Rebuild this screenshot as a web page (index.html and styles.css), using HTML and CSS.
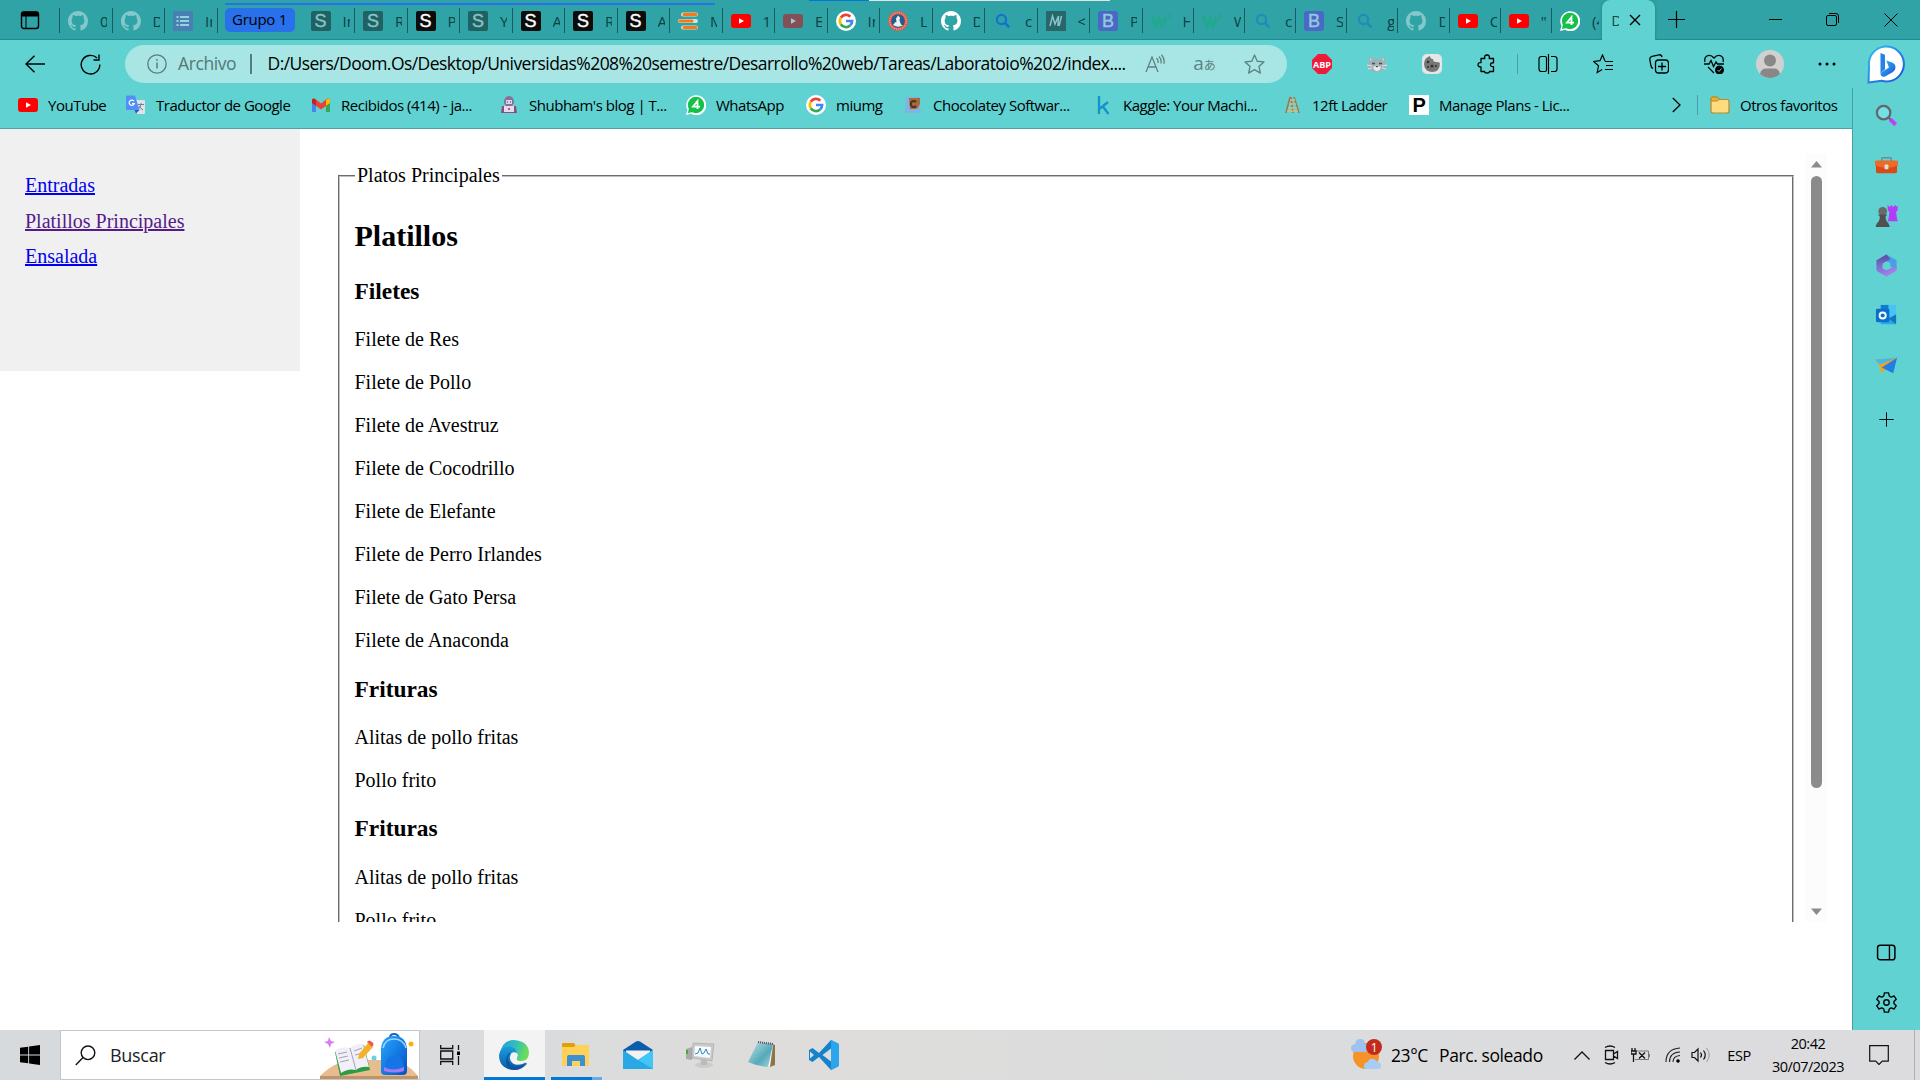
FILE: index.html
```html
<!DOCTYPE html>
<html lang="es">
<head>
<meta charset="utf-8">
<title>Platillos</title>
<link rel="stylesheet" href="styles.css">
</head>
<body>
<svg class="defs" aria-hidden="true">
  <defs>
    <linearGradient id="gEdge" x1="0" y1="0" x2="1" y2=".3"><stop offset="0" stop-color="#1ba0e0"/><stop offset=".6" stop-color="#35c1b5"/><stop offset="1" stop-color="#6bdc5a"/></linearGradient>
    <linearGradient id="gEdge2" x1="0" y1="0" x2="0" y2="1"><stop offset="0" stop-color="#1b9de2"/><stop offset="1" stop-color="#0c59a4"/></linearGradient>
    <linearGradient id="gBing" x1="0" y1="0" x2="1" y2="1"><stop offset="0" stop-color="#2fc0f5"/><stop offset="1" stop-color="#1c50d8"/></linearGradient>
    <linearGradient id="gBag" x1="0" y1="0" x2="1" y2="1"><stop offset="0" stop-color="#27a7ff"/><stop offset="1" stop-color="#0450c8"/></linearGradient>
    <linearGradient id="gOffice" x1="0" y1="0" x2="1" y2="1"><stop offset="0" stop-color="#7c63d8"/><stop offset="1" stop-color="#b58bee"/></linearGradient>
    <linearGradient id="gOffice2" x1="0" y1="0" x2="0" y2="1"><stop offset="0" stop-color="#5a4aa8"/><stop offset="1" stop-color="#8f88e0"/></linearGradient>
    <linearGradient id="gNote" x1="0" y1="0" x2="1" y2="1"><stop offset="0" stop-color="#bfe3e8"/><stop offset=".6" stop-color="#56a9b9"/><stop offset="1" stop-color="#a7d7df"/></linearGradient>
  </defs>
  <symbol id="github" viewBox="0 0 16 16"><path fill="currentColor" d="M8 0C3.58 0 0 3.58 0 8c0 3.54 2.29 6.53 5.47 7.59.4.07.55-.17.55-.38 0-.19-.01-.82-.01-1.49-2.01.37-2.53-.49-2.69-.94-.09-.23-.48-.94-.82-1.13-.28-.15-.68-.52-.01-.53.63-.01 1.08.58 1.23.82.72 1.21 1.87.87 2.33.66.07-.52.28-.87.51-1.07-1.78-.2-3.64-.89-3.64-3.95 0-.87.31-1.59.82-2.15-.08-.2-.36-1.02.08-2.12 0 0 .67-.21 2.2.82.64-.18 1.32-.27 2-.27s1.36.09 2 .27c1.53-1.04 2.2-.82 2.2-.82.44 1.1.16 1.92.08 2.12.51.56.82 1.27.82 2.15 0 3.07-1.87 3.75-3.65 3.95.29.25.54.73.54 1.48 0 1.07-.01 1.93-.01 2.2 0 .21.15.46.55.38A8.01 8.01 0 0016 8c0-4.42-3.58-8-8-8z"/></symbol>
  <symbol id="list" viewBox="0 0 20 20"><rect width="20" height="20" rx="1" fill="#4880b4"/><path d="M3.500 6h2M3.500 10h2M3.500 14h2M7 6h9M7 10h9M7 14h9" stroke="#98d0dc" stroke-width="2"/></symbol>
  <symbol id="youtube" viewBox="0 0 20 20"><rect y="3" width="20" height="14" rx="3" fill="currentColor"/><path d="M8 7.200v5.600l5-2.800z" fill="#fff"/></symbol>
  <symbol id="google" viewBox="0 0 20 20"><circle cx="10" cy="10" r="10" fill="#fff"/><g fill="none" stroke-width="2.700"><path d="M4.800 6.800A6.100 6.100 0 0 1 14.300 5.700" stroke="#ea4335"/><path d="M4.800 13.200A6.100 6.100 0 0 1 4.800 6.800" stroke="#fbbc05"/><path d="M14 14.600A6.100 6.100 0 0 1 4.800 13.200" stroke="#34a853"/><path d="M10 10h6.100A6.100 6.100 0 0 1 14 14.600" stroke="#4285f4"/></g></symbol>
  <symbol id="stack" viewBox="0 0 20 20"><path d="M5 3.500h13M2 10h16M5 16.500h13" stroke="#c8e8dd" stroke-width="4" stroke-linecap="round"/><path d="M6 3.500h12M2 10h12M6 16.500h12" stroke="#ff7510" stroke-width="3" stroke-linecap="round"/></symbol>
  <symbol id="crest" viewBox="0 0 20 20"><circle cx="10" cy="10" r="10" fill="#e25b4d"/><circle cx="10" cy="10" r="8.300" fill="none" stroke="#f5c5b5" stroke-dasharray="1 1"/><circle cx="10" cy="10" r="6.800" fill="#235d8a"/><path d="M5 14l2.500-3 1 .5-.5-4 2-3 2 2-.5 3 1.500 4 2 1q-5 2.500-10-.5z" fill="#e8f2f5"/></symbol>
  <symbol id="search" viewBox="0 0 20 20"><circle cx="8.500" cy="8.500" r="4.600" fill="none" stroke="currentColor" stroke-width="2.200"/><path d="M12 12l4.300 4.300" stroke="currentColor" stroke-width="2.600"/></symbol>
  <symbol id="mdn" viewBox="0 0 20 20"><rect width="20" height="20" fill="#28666a"/><path d="M4 15L6.500 5l2.500 8 3.500-8-.5 10M15.500 5L13 15" fill="none" stroke="#87c5c7" stroke-width="1.500"/></symbol>
  <symbol id="w3" viewBox="0 0 20 20"><path d="M1 5.500l4 9 3-6.500 3 6.500 4-8.500" fill="none" stroke="#22a88e" stroke-width="3.600"/><path d="M16 3h3l-1.500 1.800q2 .2 1.200 1.800t-2.700.4" fill="none" stroke="#22a88e" stroke-width="1.200"/></symbol>
  <symbol id="whatsapp" viewBox="0 0 20 20"><path d="M0 20l1.500-5A10 10 0 1 1 5 18.700z" fill="#fff"/><circle cx="10" cy="10" r="8.200" fill="#12c147"/><path d="M2 18l1-5 4 4z" fill="#12c147"/><path d="M11.500 14V6L7 11.700h7" stroke="#fff" stroke-width="1.800" fill="none"/></symbol>
</svg>

<div class="window">
  <header class="strip">
    <div class="progress"></div>
    <div class="group-line"></div>
    <div class="tabmenu"><svg width="20" height="20" viewBox="0 0 20 20"><rect x="1.500" y="2" width="17" height="16.500" rx="2.500" fill="none" stroke="#000" stroke-width="1.400"/><path d="M1.500 6V4q0-2 2-2h13q2 0 2 2v2z" fill="#000" stroke="#000"/><path d="M6 6v12" stroke="#000"/></svg></div>
    <div class="tab dim"><svg><use href="#github"/></svg><span>0</span></div>
    <div class="tab dim"><svg><use href="#github"/></svg><span>D</span></div>
    <div class="tab"><svg><use href="#list"/></svg><span>In</span></div>
    <div class="group"><span>Grupo 1</span></div>
    <div class="tab first"><i class="s faded">S</i><span>In</span></div>
    <div class="tab"><i class="s faded">S</i><span>R</span></div>
    <div class="tab"><i class="s">S</i><span>P</span></div>
    <div class="tab"><i class="s faded">S</i><span>Y</span></div>
    <div class="tab"><i class="s">S</i><span>A</span></div>
    <div class="tab"><i class="s">S</i><span>R</span></div>
    <div class="tab"><i class="s">S</i><span>A</span></div>
    <div class="tab"><svg><use href="#stack"/></svg><span>M</span></div>
    <div class="tab red"><svg><use href="#youtube"/></svg><span>1</span></div>
    <div class="tab red asleep"><svg><use href="#youtube"/></svg><span>E</span></div>
    <div class="tab"><svg><use href="#google"/></svg><span>In</span></div>
    <div class="tab"><svg><use href="#crest"/></svg><span>L</span></div>
    <div class="tab white"><svg><use href="#github"/></svg><span>D</span></div>
    <div class="tab blue"><svg><use href="#search"/></svg><span>c</span></div>
    <div class="tab"><svg><use href="#mdn"/></svg><span>&lt;</span></div>
    <div class="tab"><i class="s b">B</i><span>P</span></div>
    <div class="tab slim"><svg><use href="#w3"/></svg><span>H</span></div>
    <div class="tab slim"><svg><use href="#w3"/></svg><span>W</span></div>
    <div class="tab slim paleblue"><svg><use href="#search"/></svg><span>c</span></div>
    <div class="tab slim"><i class="s b">B</i><span>S</span></div>
    <div class="tab slim paleblue"><svg><use href="#search"/></svg><span>g</span></div>
    <div class="tab slim dim"><svg><use href="#github"/></svg><span>D</span></div>
    <div class="tab slim red"><svg><use href="#youtube"/></svg><span>C</span></div>
    <div class="tab slim red"><svg><use href="#youtube"/></svg><span>"</span></div>
    <div class="tab slim"><svg><use href="#whatsapp"/></svg><span>(4</span></div>
    <div class="tab current"><span>D</span><svg class="x" viewBox="0 0 12 12"><path d="M1 1l10 10M11 1L1 11" stroke="#000" stroke-width="1.400"/></svg></div>
    <div class="newtab"><svg width="17" height="17" viewBox="0 0 17 17"><path d="M8.500 0v17M0 8.500h17" stroke="#000" stroke-width="1.200"/></svg></div>
    <div class="winctl">
      <svg width="13" height="13" viewBox="0 0 13 13"><path d="M0 6.500h13" stroke="#000"/></svg>
      <svg width="13" height="13" viewBox="0 0 13 13"><rect x=".5" y="2.500" width="10" height="10" rx="1.500" fill="none" stroke="#000"/><path d="M3 .5h7q2.500 0 2.500 2.500v7" fill="none" stroke="#000"/></svg>
      <svg width="14" height="14" viewBox="0 0 14 14"><path d="M.5.5l13 13M13.500.5l-13 13" stroke="#000"/></svg>
    </div>
  </header>

  <div class="browser">
    <div class="left">
      <nav class="toolbar">
        <svg class="back" width="21" height="18" viewBox="0 0 21 18"><path d="M20 9H1M9.500.8L1 9l8.500 8.200" fill="none" stroke="#000" stroke-width="1.400"/></svg>
        <svg class="reload" width="21" height="21" viewBox="0 0 21 21"><path d="M19.800 10.500A9.300 9.300 0 1 1 17 4M19 .5V6h-5.500" fill="none" stroke="#000" stroke-width="1.400"/></svg>
        <div class="address">
          <svg width="20" height="20" viewBox="0 0 20 20"><circle cx="10" cy="10" r="9.200" fill="none" stroke="#5f7b7b" stroke-width="1.300"/><path d="M10 8.500v6M10 5v1.800" stroke="#5f7b7b" stroke-width="1.500"/></svg>
          <span class="scheme">Archivo</span><span class="bar"></span>
          <span class="url">D:/Users/Doom.Os/Desktop/Universidas%208%20semestre/Desarrollo%20web/Tareas/Laboratoio%202/index....</span>
          <div class="slots">
            <svg width="20" height="20" viewBox="0 0 20 20"><path d="M1 18L7 3l6 15M3 13h8M11.500 4q2 2 1.500 5M14 2.500q2.800 2.800 2 7M16.500.8q3.500 4 2.400 9" fill="none" stroke="#5f8383" stroke-width="1.300"/></svg>
            <span class="lang">a<small>あ</small></span>
            <svg width="21" height="21" viewBox="0 0 20 20"><path d="M10 1l2.600 5.900 6.400.6-4.800 4.300 1.400 6.400L10 14.900l-5.600 3.300 1.400-6.400L1 7.500l6.400-.6z" fill="none" stroke="#5f8383" stroke-width="1.300" stroke-linejoin="round"/></svg>
          </div>
        </div>
        <div class="exts">
          <svg width="20" height="20" viewBox="0 0 20 20"><path d="M6 0h8l6 6v8l-6 6H6l-6-6V6z" fill="#ee1b3b"/><text x="10" y="13.500" class="abp" text-anchor="middle" textLength="18" lengthAdjust="spacingAndGlyphs">ABP</text></svg>
          <svg width="20" height="20" viewBox="0 0 20 20"><path d="M2 1.500L6 5h8l4-3.500V10l1 4q-4 4-9 4t-9-4l1-4z" fill="#a3afb5"/><path d="M0 11l5 1M20 11l-5 1M1 15l4-1M19 15l-4-1" stroke="#dce5e7"/><path d="M3 3.500l2 2-2 2zM17 3.500l-2 2 2 2z" fill="#d9c6c6"/><path d="M6 13q4-3 8 0-1 4-4 4t-4-4z" fill="#e4e9ea"/><path d="M5 9.500h3M12 9.500h3" stroke="#215c68" stroke-width="1.600"/><path d="M8.500 12h3L10 13.500z" fill="#333"/></svg>
          <svg width="20" height="20" viewBox="0 0 20 20"><rect width="20" height="20" rx="5" fill="#e6e6e6"/><path d="M8 2q0 3 3 3 0 3 3 3t4 1q0 9-8 9-8-1-8-8 0-6 6-8z" fill="#777"/><g fill="#333"><circle cx="6" cy="8" r="1.300"/><circle cx="10" cy="12" r="1.600"/><circle cx="6" cy="13" r="1"/><circle cx="14" cy="12" r="1"/></g></svg>
          <svg width="20" height="20" viewBox="0 0 20 20"><path d="M4 4.500h3.800Q7 1 10 1t2.200 3.500h4.300v4.300q-3-.3-3 1.900t3 1.900v4.900h-4.100Q12.500 19 10 19t-2.400-1.500H4v-4.700Q1 13 1 10.700T4 8.600z" fill="none" stroke="#000" stroke-width="1.300" stroke-linejoin="round"/></svg>
        </div>
        <span class="sep"></span>
        <div class="exts second">
          <svg width="20" height="20" viewBox="0 0 20 20"><path d="M7 2.500H3.500q-2.500 0-2.500 2.500v10q0 2.500 2.500 2.500H7q1.500 0 1.500-1.500V4Q8.500 2.500 7 2.500zM13 2.500h3.500Q19 2.500 19 5v10q0 2.500-2.500 2.500H13M10.500 0v20" fill="none" stroke="#000" stroke-width="1.200"/></svg>
          <svg width="20" height="20" viewBox="0 0 20 20"><path d="M12 7L9.500 1 7 6.700l-6.500.8 5 4.300L4.200 18.500l5-3M12 7.500h8M13 11.500h7M12 15.500h8" fill="none" stroke="#000" stroke-width="1.200"/></svg>
          <svg width="20" height="20" viewBox="0 0 20 20"><rect x="6.500" y="6" width="13" height="13" rx="3" fill="none" stroke="#000" stroke-width="1.300"/><path d="M13 8.500v8M9 12.500h8M4 14.500Q2.500 14 2 12L.8 5.500Q.5 3 3 2.300L10 .8q2.500-.3 3 2.200" fill="none" stroke="#000" stroke-width="1.300"/></svg>
          <svg width="20" height="20" viewBox="0 0 20 20"><path d="M1 8Q0 4 2.500 2.200 6.500 0 10 4q3.500-4 7.500-1.800Q20 4 19 8M4 13l6 6M0 10h5l2-3.500 2.500 6L12 8l1.500 2H20" fill="none" stroke="#000" stroke-width="1.300"/><circle cx="15.500" cy="16" r="4.500" fill="#000"/><path d="M13.500 16l1.500 1.500 2.500-3" stroke="#61d2d2" fill="none"/></svg>
          <svg width="28" height="28" viewBox="0 0 28 28"><circle cx="14" cy="14" r="14" fill="#d2d0ce"/><circle cx="14" cy="10.500" r="6" fill="#8a8886"/><path d="M4 24q1-5.500 6-5.500h8q5 0 6 5.500-4.500 4-10 4T4 24z" fill="#8a8886"/></svg>
          <svg width="20" height="20" viewBox="0 0 20 20"><g fill="#000"><circle cx="3" cy="10" r="1.500"/><circle cx="10" cy="10" r="1.500"/><circle cx="17" cy="10" r="1.500"/></g></svg>
        </div>
      </nav>

      <nav class="bookmarks">
        <a class="red"><svg><use href="#youtube"/></svg><span>YouTube</span></a>
        <a><svg viewBox="0 0 20 20"><path d="M9 5h9q1 0 1 1v12q0 1-1 1H11z" fill="#dde3e8"/><path d="M12 9.500h6M15 8v1.500q-1 4-3 5M13 11q2 3 4 4" stroke="#70808c" fill="none"/><path d="M0 1.500Q0 .5 1 .5h8l4.500 14.500H1q-1 0-1-1z" fill="#518ef5"/><path d="M8.500 15h5L10 18.500z" fill="#2f55c0"/><path d="M7.800 6.200a2.600 2.600 0 1 0 .4 2.300H6" stroke="#fff" stroke-width="1.200" fill="none"/></svg><span>Traductor de Google</span></a>
        <a><svg viewBox="0 0 20 20"><path d="M1 5v12h4V8z" fill="#4285f4"/><path d="M19 5v12h-4V8z" fill="#34a853"/><path d="M1 4.500q2-2 4 0l5 4 5-4q2-2 4 0v3.500L10 14.500 1 8z" fill="#ea4335"/><path d="M15 5v5.800L19 8V5q-1-3-4 0z" fill="#fbbc04"/><path d="M1 8l4 2.800V5Q2 2 1 5z" fill="#c5221f"/></svg><span>Recibidos (414) - ja...</span></a>
        <a><svg viewBox="0 0 20 20"><path d="M5 8q0-7 5-7t5 7l-2 3H7z" fill="#87709b"/><path d="M7 5h6v4H7z" fill="#ded6e4"/><path d="M8 7h1M11 7h1" stroke="#532e59"/><path d="M3 11h14l1 7H2z" fill="#81547d"/><rect x="5" y="11" width="10" height="6" fill="#e7dce9"/><circle cx="10" cy="14" r="1" fill="#9b3160"/></svg><span>Shubham's blog | T...</span></a>
        <a><svg><use href="#whatsapp"/></svg><span>WhatsApp</span></a>
        <a><svg><use href="#google"/></svg><span>miumg</span></a>
        <a><svg viewBox="0 0 20 20"><path d="M3 2h14v12l2 4H2z" fill="#7fb4e4"/><path d="M6 3h11v6l-3 5H7z" fill="#a9693a"/><path d="M13 7a3 3 0 1 0 0 4" fill="none" stroke="#51301c" stroke-width="2"/></svg><span>Chocolatey Softwar...</span></a>
        <a><svg viewBox="0 0 20 20"><path d="M6 1v18M15 7l-8 6.500M9.500 11l6 8" stroke="#1493ca" stroke-width="2.300" fill="none"/></svg><span>Kaggle: Your Machi...</span></a>
        <a><svg viewBox="0 0 20 20"><path d="M8 2L4 18M12 2l5 16M9 2L11 18" stroke="#9a7b4e" stroke-width="1.600"/><path d="M8 5h5M7 9h7M6 13h9M5 16h11" stroke="#d5bd83" stroke-width="1.500"/></svg><span>12ft Ladder</span></a>
        <a><i class="p">P</i><span>Manage Plans - Lic...</span></a>
        <svg class="more" viewBox="0 0 9 16"><path d="M.8 1L8 8 .8 15" fill="none" stroke="#000" stroke-width="1.300"/></svg>
        <a class="others"><svg viewBox="0 0 20 20"><path d="M1 4q0-2 2-2h4l2.500 2.500H17q2 0 2 2V16q0 2-2 2H3q-2 0-2-2z" fill="#ffdc7e" stroke="#b88a28" stroke-width="1.200"/><path d="M1 6V4q0-2 2-2h4l2 2.500L7.500 6z" fill="#ecb12e" stroke="#b88a28"/></svg><span>Otros favoritos</span></a>
      </nav>

      <div class="page">
        <aside class="menu">
          <a href="#entradas">Entradas</a>
          <a href="#platillos" class="visited">Platillos Principales</a>
          <a href="#ensalada">Ensalada</a>
        </aside>
        <main class="frame">
          <div class="content">
            <fieldset>
              <legend>Platos Principales</legend>
              <h2>Platillos</h2>
              <h3>Filetes</h3>
              <p>Filete de Res</p>
              <p>Filete de Pollo</p>
              <p>Filete de Avestruz</p>
              <p>Filete de Cocodrillo</p>
              <p>Filete de Elefante</p>
              <p>Filete de Perro Irlandes</p>
              <p>Filete de Gato Persa</p>
              <p>Filete de Anaconda</p>
              <h3>Frituras</h3>
              <p>Alitas de pollo fritas</p>
              <p>Pollo frito</p>
              <h3>Frituras</h3>
              <p>Alitas de pollo fritas</p>
              <p>Pollo frito</p>
            </fieldset>
          </div>
          <div class="scroll">
            <svg viewBox="0 0 11 7"><path d="M5.500 0L11 6.500H0z" fill="#8b8b8b"/></svg>
            <div class="thumb"></div>
            <svg viewBox="0 0 11 7"><path d="M0 .5h11L5.500 7z" fill="#8b8b8b"/></svg>
          </div>
        </main>
      </div>
    </div>

    <aside class="side">
      <div class="bing"><svg width="39" height="39" viewBox="0 0 39 39"><path d="M1.500 37.500L2 21A17.500 17.500 0 1 1 19.500 36.500q-2 0-5-.7z" fill="#fff" stroke="url(#gBing)" stroke-width="2"/><path d="M13.500 8l4.500 1.800v14.500l-4.500 4z" fill="#2383e8"/><path d="M18 25l4-2.500-2-5-.8-2 6 2q3.300 1.500 3.300 5 0 2.800-2.500 4.500L18 31.500q-4.500 1-4.500-3.500z" fill="url(#gBing)"/></svg></div>
      <div class="tools">
        <svg viewBox="0 0 24 24"><path d="M13.500 13.500l3 3" stroke="#5d6064" stroke-width="2"/><path d="M16 16l5.500 5.500" stroke="#c63bf5" stroke-width="4.200"/><circle cx="9" cy="9" r="7" fill="#74dfe5" stroke="#64676b" stroke-width="2.300"/></svg>
        <svg viewBox="0 0 24 24"><path d="M7 8V5q0-1 1-1h8q1 0 1 1v3" fill="none" stroke="#6c8d91" stroke-width="1.500"/><rect x="1" y="7" width="22" height="13" rx="1.500" fill="#d64b16"/><path d="M0 7h24v5q-12 5-24 0z" fill="#ef6a25"/><rect x="10" y="11" width="4" height="5" rx="1" fill="#ddd"/></svg>
        <svg viewBox="0 0 24 24"><path d="M13 1l2.500 2L17 1l2 2 2-2 2 2 1-2-.5 6-1.500 1 1 8 1 2H13l1-2 1-8-1.500-1z" fill="#b43bfa"/><circle cx="8" cy="7.500" r="4.500" fill="#6a6a6a"/><path d="M3 11h10l-2 2q0 5 3 7l1.500 4H.5L2 20q3-2 3-7z" fill="#505050"/></svg>
        <svg viewBox="0 0 24 24"><path d="M12 .5l10.500 6V16L16 13V9.500l-4-2-5-4z" fill="#479fe6"/><path d="M12 .5L1.500 6.500V17l6 4 .5-11 4-2.500 4-2z" fill="url(#gOffice2)"/><path d="M22.500 12v5.500L12 23.500 1.500 17.500l1-.5L8 15l4 2 4-2z" fill="url(#gOffice)"/></svg>
        <svg viewBox="0 0 24 24"><rect x="6" y="1" width="16" height="15" fill="#45c4f5"/><path d="M6 1h8v7H6z" fill="#117cd0"/><path d="M6 21V12l8 4 8-5v10z" fill="#28a8ea"/><path d="M22 11v10l-8-6z" fill="#1276bd"/><rect x="1" y="5" width="14" height="14" rx="1.500" fill="#0a70cb"/><circle cx="8" cy="12" r="3.200" fill="none" stroke="#fff" stroke-width="2"/></svg>
        <svg viewBox="0 0 24 24"><path d="M0 6l23-2-10 8z" fill="#3fa6f4"/><path d="M0 6l23-2L7 20 4 11z" fill="#f0a51d"/><path d="M23 4l-4 16-12-6z" fill="#247de2"/><path d="M0 6l23-2L5 11z" fill="#49b7ef"/></svg>
        <svg class="plus" viewBox="0 0 24 24"><path d="M12 4.500v15M4.500 12h15" stroke="#000"/></svg>
      </div>
      <div class="bottom">
        <svg viewBox="0 0 20 20"><rect x="1.500" y="3" width="16.500" height="14" rx="2.500" fill="none" stroke="#000" stroke-width="1.400"/><path d="M12.800 3v14" stroke="#000" stroke-width="1.300"/></svg>
        <svg viewBox="0 0 20 20"><path d="M8 .8h4l.6 3 1.800 1 2.900-1L19.300 7l-2.200 2v2l2.200 2-2 3.200-2.900-1-1.800 1-.6 3H8l-.6-3-1.800-1-2.900 1L.7 13l2.200-2V9L.7 7l2-3.200 2.900 1 1.800-1z" fill="none" stroke="#000" stroke-width="1.300" stroke-linejoin="round"/><circle cx="10" cy="10" r="2.600" fill="none" stroke="#000" stroke-width="1.300"/></svg>
      </div>
    </aside>
  </div>

  <footer class="taskbar">
    <div class="start"><svg width="20" height="20" viewBox="0 0 20 20"><path d="M0 2.800l8.200-1.100v7.800H0zM9.100 1.600L20 0v9.500H9.100zM0 10.400h8.200v7.900L0 17.200zM9.100 10.400H20V20L9.100 18.400z"/></svg></div>
    <div class="find">
      <svg width="21" height="21" viewBox="0 0 21 21"><circle cx="13" cy="7.800" r="6.800" fill="none" stroke="#111" stroke-width="1.400"/><path d="M8 12.500L.8 20" stroke="#111" stroke-width="1.400"/></svg>
      <span>Buscar</span>
      <svg class="art" width="99" height="48" viewBox="0 0 99 48"><path d="M0 44q16-16 35-16h32q18 0 31 16z" fill="#e7bd8f"/><path d="M0 44h98v4H0z" fill="#be9468"/><path d="M9 2l2 4 4 1-4 2-1 4-2-4-4-2 4-1z" fill="#dd7aef" transform="translate(0 3)"/><path d="M15 20l29-7 6 25-30 6z" fill="#2f9a45"/><path d="M15 18q8-4 15-2 7-5 13-4l6 23q-8-1-13 3-8-2-15 3z" fill="#f1eff8"/><path d="M30 16l6 22M18 22l9-2M19 26l9-2M20 30l9-2M34 19l8-3M35 23l8-2" stroke="#a4a1b8"/><path d="M39 22L48 11l5 4-10 11-5 1z" fill="#f6b12b"/><path d="M47 10q2-3 5 0 3 2 0 5z" fill="#f1594d"/><circle cx="54" cy="26" r="2.500" fill="#68d2df"/><path d="M70 6q0-4 4-4t5 4" stroke="#1063cd" stroke-width="2" fill="none"/><path d="M61 17Q62 4 74 4t13 13v22q0 4-4 4H65q-4 0-4-4z" fill="url(#gBag)"/><path d="M63 16Q65 7 74 7t12 9" stroke="#9bd5ff" fill="none" stroke-width="1.500"/><path d="M65 36q0-12 9-12t10 12v2q-9 4-19 0z" fill="#1675e5"/><path d="M64 35q9 5 20 0v4q-9 3-20 0z" fill="#a57bf0"/><circle cx="91" cy="12" r="2.500" fill="#ffad14"/></svg>
    </div>
    <div class="taskview"><svg width="20" height="20" viewBox="0 0 20 20"><path d="M.7 0v3.500h12V0M.7 20v-3.500h12V20M.7 6h12v8H.7zM18.500 0v5M18.500 11v9" fill="none" stroke="#111" stroke-width="1.300"/><path d="M17 6.500h3.500V10H17z"/></svg></div>
    <div class="apps">
      <div class="on"><svg viewBox="0 0 30 30"><path d="M1 14Q3 0 15 0q14 1 15 12 0 9-8 9-5 0-4-3 2-4-1-6Q11 8 1 14z" fill="url(#gEdge)"/><path d="M0 15Q1 7 9 6.500q8 0 9 7-3-2-6 1-3 5 2 9 5 3 13-1-4 7.500-12 7.500Q0 29 0 15z" fill="url(#gEdge2)"/><path d="M12 12q-6 7 0 13 6 4 15-2 2 0 0 2-5 5-11 5-9-1-9-9 0-7 5-9z" fill="#0d4f98" opacity=".8"/><circle cx="15" cy="15.500" r="3.300" fill="#f0f2f3"/></svg></div>
      <div class="open"><svg viewBox="0 0 30 30"><path d="M1 4q0-1 1-1h11l2 3v5H1z" fill="#e2a006"/><path d="M1 7h12l2-2h12q1 0 1 1v20H1z" fill="#ffd257"/><path d="M6 26V17q0-2 2-2h14q2 0 2 2v9h-5v-5h-8v5z" fill="#3b8fd3"/></svg></div>
      <div><svg viewBox="0 0 30 30"><path d="M0 10l13-8.500q2-1 4 0L30 10v6H0z" fill="#0c5cac"/><path d="M3 10.500h24v8l-12 6-12-6z" fill="#f2f2f2"/><path d="M0 10l15 10L30 10v19H0z" fill="#2aa7e5"/><path d="M30 10v19L15 20z" fill="#42c6f5"/></svg></div>
      <div><svg viewBox="0 0 30 30"><path d="M1 9l6-2v13l-6-1z" fill="#aaa"/><path d="M2 10v4" stroke="#3faf2e" stroke-width="2"/><path d="M8 3l21 1-2 17-20-3z" fill="#c9c9c9" stroke="#999" stroke-width=".5"/><path d="M10 6l16 1-1 11-16-2z" fill="#f5fbff"/><path d="M10 14l3-1 2-5 2 6 2-1 2-4 2 5h2" fill="none" stroke="#3785bb"/><ellipse cx="19" cy="25" rx="9" ry="3" fill="#ccc"/><path d="M16 20h6v5h-6z" fill="#bbb"/></svg></div>
      <div><svg viewBox="0 0 30 30"><path d="M22 3l6 2v20l-5 2z" fill="#8c7649"/><path d="M22 3l4 2-3 22-6-4z" fill="#f2f2f2"/><path d="M11 2l15 2-5 23Q10 26 1 22z" fill="url(#gNote)"/><path d="M11 2l15 2" stroke="#555" stroke-width="2" stroke-dasharray="1 1"/></svg></div>
      <div><svg viewBox="0 0 30 30"><path d="M22 0l7 3.500v23L22 30 10 17l-6.500 5L0 20V10l3.500-2L10 13z" fill="#1482cc"/><path d="M22 0l8 4v22l-8 4z" fill="#2ba6ee"/><path d="M22 8.500v13L13.500 15zM1 11.500L5 15l-4 3.500z" fill="#dcdddd"/></svg></div>
    </div>
    <div class="weather">
      <svg width="31" height="32" viewBox="0 0 31 32"><circle cx="15" cy="17" r="13" fill="#f59228"/><path d="M4 13q-4 0-4-4 0-3 4-4Q5 0 9 0q5 0 5 5 4 1 4 4t-4 4z" fill="#9fc1ef"/><path d="M16 30q-4 0-3-4 1-3 4-3 1-4 5-3 4 1 4 3 4 0 4 4 0 3-3 3z" fill="#a8ccf5"/><circle cx="23" cy="8" r="8" fill="#c42b1c"/><text x="23" y="12.500" text-anchor="middle" class="badge">1</text></svg>
      <span class="deg">23°C</span><span>Parc. soleado</span>
    </div>
    <div class="tray">
      <svg width="16" height="9" viewBox="0 0 16 9"><path d="M.5 8.500L8 1l7.500 7.500" fill="none" stroke="#111" stroke-width="1.300"/></svg>
      <svg width="16" height="20" viewBox="0 -1 16 20"><path d="M1.500 4.500h8v9h-8zM9.500 8l4-2.500v7l-4-2.500M1 1.500Q6-1.500 11 1.500M1 16.500q5 3 10 0" fill="none" stroke="#111" stroke-width="1.300"/></svg>
      <svg width="20" height="14" viewBox="0 0 20 14"><path d="M5 3h12.500v8.500H4M18.500 6v3" fill="none" stroke="#777"/><path d="M1 0v3M4 0v3M0 3h5v3H0zM2.500 6v8M8 4.500l6 6M14 4.500l-6 6" fill="none" stroke="#111" stroke-width="1.300"/></svg>
      <svg width="16" height="16" viewBox="0 0 16 16"><path d="M1 15Q1 2 15 1M4.500 15Q4.500 5.500 15 5M8 15q0-6 7-6.500" fill="none" stroke="#222" stroke-width="1.100"/><circle cx="13" cy="14" r="1.800"/></svg>
      <svg width="20" height="16" viewBox="0 0 20 16"><path d="M1 5.500h2.500L7 2v12L3.500 10.500H1zM9.500 5.500q2 2.500 0 5M12.500 3.500q3.500 4.500 0 9" fill="none" stroke="#111" stroke-width="1.200"/><path d="M15.500 1q5.500 7 0 14" fill="none" stroke="#999"/></svg>
      <span class="esp">ESP</span>
      <div class="clock"><span>20:42</span><span>30/07/2023</span></div>
      <svg width="20" height="20" viewBox="0 0 20 20"><path d="M.7.7h18.600v15.500h-6L10 19.500 6.700 16.200h-6z" fill="none" stroke="#111" stroke-width="1.200"/></svg>
    </div>
  </footer>
</div>
</body>
</html>
```
FILE: styles.css
```css
* { box-sizing: border-box; }
body { margin: 0; font-family: "Open Sans", "Noto Sans", sans-serif; color: #000; overflow: hidden; }
.defs { position: absolute; width: 0; height: 0; }
svg { flex: none; display: block; }
.window { width: 1920px; height: 1080px; display: flex; flex-direction: column; background: #fff; }

/* tab strip */
.strip { position: relative; height: 40px; display: flex; align-items: flex-start; background: #30a3a7; border-bottom: 1px solid #238b8f; padding-top: 8px; }
.progress { position: absolute; top: 0; left: 809px; width: 301px; height: 1px; background: linear-gradient(90deg, #0078d7 60px, #e4e4e4 60px); }
.group-line { position: absolute; top: 3px; left: 225px; width: 490px; height: 2px; background: #2970eb; border-radius: 1px 0 0 0; }
.tabmenu { flex: none; width: 59px; padding: 2px 0 0 20px; }
.tab { flex: none; width: 52.5px; height: 25px; padding-left: 8px; display: flex; align-items: center; border-left: 1px solid #195c5f; font-size: 15px; color: #062f31; }
.tab svg { width: 20px; height: 20px; }
.tab span { width: 7px; margin-left: 12px; overflow: hidden; white-space: nowrap; line-height: 24px; opacity: .85; }
.tab.slim { width: 51.2px; }
.tab.first { border-left-color: transparent; }
.dim svg { color: #83c8ca; }
.white svg { color: #fff; }
.red svg { color: #f00; }
.asleep svg { color: #d80008; opacity: .5; }
.blue svg { color: #1573cb; }
.paleblue svg { color: #228bb8; }
.s { flex: none; width: 20px; height: 20px; border-radius: 2px; background: #0c0c0c; color: #fff; font: 18px/20px "Liberation Sans", sans-serif; -webkit-text-stroke: .4px; text-align: center; }
.s.faded { background: #206164; color: #84c5c6; }
.s.b { background: #4c68c7; color: #93c9dd; border-radius: 3px; }
.group { flex: none; width: 85px; height: 25px; padding-left: 7px; border-left: 1px solid #195c5f; }
.group span { display: block; width: 70px; height: 24px; border-radius: 5px; background: #2970eb; font-size: 15px; letter-spacing: -.3px; line-height: 23px; text-align: center; }
.tab.current { width: 53px; height: 40px; margin-top: -8px; border: 0; border-radius: 8px 8px 0 0; background: #61d2d2; padding-left: 9px; box-shadow: 0 0 3px #1c7d80; clip-path: inset(0 -3px 0 -3px); }
.tab.current span { margin-left: 0; width: 8px; }
.tab.current .x { width: 12px; height: 12px; margin-left: 10px; }
.newtab { width: 46px; padding: 3px 0 0 13px; }
.winctl { margin-left: auto; width: 151px; padding-top: 5px; display: grid; grid-template-columns: 57px 58px 36px; }

/* browser body */
.browser { height: 990px; display: flex; background: #61d2d2; }
.left { width: 1852px; display: flex; flex-direction: column; }
.toolbar { height: 48px; display: flex; align-items: center; }
.toolbar > * { flex: none; }
.back { margin-left: 25px; }
.reload { margin-left: 34px; }
.address { margin-left: 24px; width: 1162px; height: 38px; border-radius: 19px; background: #a7e6e4; display: flex; align-items: center; padding-left: 22px; font-size: 17.5px; line-height: 22px; }
.address > * { flex: none; }
.scheme { width: 72px; margin-left: 11px; color: #557777; letter-spacing: -.4px; }
.bar { width: 1.500px; height: 20px; background: #557d7d; margin-right: 16px; }
.url { width: 877px; white-space: nowrap; letter-spacing: -.55px; }
.scheme, .url { transform: translateY(-1px); }
.slots { display: flex; align-items: center; justify-content: space-between; width: 121px; }
.lang { font-size: 19px; line-height: 20px; color: #5f8383; }
.lang small { font-family: "Noto Sans CJK JP", sans-serif; font-size: 12px; }
.exts { display: grid; grid-template-columns: repeat(4, 55px); justify-items: center; margin-left: 7px; }
.exts svg { align-self: center; }
.abp { font: bold 9px "Open Sans", sans-serif; fill: #fff; }
.sep { width: 1px; height: 20px; margin-left: 3px; background: #4a9fa0; }
.exts.second { grid-template-columns: 55px 56px 55px 55px 58px 56px; margin: 0 -3px 0 2px; }
.bookmarks { height: 41px; display: grid; grid-template-columns: 108px 185px 188px 187px 120px 97px 190px 189px 127px 263px 25px 150px; align-items: center; padding: 0 0 6px 18px; border-bottom: 1px solid #4aa3a4; font-size: 15px; }
.bookmarks a { display: flex; align-items: center; white-space: nowrap; letter-spacing: -.48px; }
.bookmarks svg { width: 20px; height: 20px; }
.bookmarks span { margin-left: 10px; }
.bookmarks svg.more { width: 9px; height: 16px; }
.p { width: 20px; height: 20px; background: #fff; font: bold 20px/20px "Liberation Sans", sans-serif; text-align: center; }
.bookmarks .others { border-left: 1px solid #4a9fa0; padding-left: 12px; }

/* document */
.page { flex: 1; display: flex; align-items: flex-start; gap: 25px; background: #fff; font: 20px "Liberation Serif", serif; color: #000; }
.menu { width: 300px; height: 242px; padding: 39px 25px; background: #f0f0f0; display: flex; flex-direction: column; align-items: flex-start; }
.menu a { line-height: 35.700px; color: #00e; }
.menu .visited { color: #551a8b; }
.frame { width: 1502px; height: 768px; margin-top: 25px; display: flex; overflow: hidden; }
.content { width: 1481px; height: 768px; padding: 10px; overflow: hidden; }
fieldset { margin: 0 2.500px; padding: 7px 15px 12.500px; border: 2px groove #c0c0c0; }
legend { padding: 0 2.500px; }
h2 { font-size: 30px; margin: 24.900px 0; }
h3 { font-size: 23.400px; margin: 23.400px 0; }
p { margin: 20px 0; }
.scroll { width: 21px; height: 768px; background: #fcfcfc; display: flex; flex-direction: column; align-items: center; padding: 7px 0; }
.scroll svg { width: 11px; height: 7px; }
.thumb { width: 11px; height: 612px; margin: 8px 0 auto; border-radius: 6px; background: #8b8b8b; }

/* side panel */
.side { width: 68px; display: flex; flex-direction: column; align-items: center; }
.bing { height: 48px; display: flex; align-items: center; }
.tools { flex: 1; width: 68px; border-left: 1px solid #4a9fa0; padding-top: 16px; display: flex; flex-direction: column; align-items: center; gap: 27px; }
.tools svg { width: 23px; height: 23px; }
.tools .plus { margin-top: 4px; }
.bottom { width: 68px; height: 107px; border-left: 1px solid #4a9fa0; display: flex; flex-direction: column; align-items: center; }
.bottom::before { content: ""; width: 35px; height: 1px; background: #4a9fa0; margin: 1px 0 18px; }
.bottom svg { width: 21px; height: 21px; margin-bottom: 29px; }

/* taskbar */
.taskbar { height: 50px; display: flex; background: linear-gradient(90deg, #d6dadd, #d9dbdd 480px, #dedddb 800px, #dbdcdd 1200px, #dcdcde); }
.start { width: 60px; padding: 15px 0 0 20px; }
.find { width: 360px; border: 1px solid #c6c6c6; background: #fff; display: flex; align-items: center; padding-left: 14px; font-size: 18px; letter-spacing: -.3px; color: #222; overflow: hidden; }
.find span { width: 150px; margin-left: 14px; }
.art { margin: 2px 0 0 61px; }
.taskview { width: 64px; padding: 15px 0 0 20px; }
.apps { display: grid; grid-template-columns: 61px repeat(5, 62px); }
.apps div { display: flex; justify-content: center; padding-top: 10px; }
.apps svg { width: 30px; height: 30px; }
.apps .on { background: #f3f3f3; border-bottom: 3px solid #0078d7; padding-right: 1px; }
.apps .open { background: linear-gradient(90deg, transparent 6px, #0078d7 6px 47px, #65acea 47px 57px, transparent 57px) 0 100% / 100% 3px no-repeat; }
.weather { margin-left: 496px; width: 223px; display: flex; align-items: center; font-size: 17.5px; letter-spacing: -.4px; white-space: nowrap; }
.weather .deg { width: 48px; margin-left: 9px; }
.badge { font: 12px "Open Sans", sans-serif; fill: #fff; }
.tray { margin-left: -7px; display: grid; grid-template-columns: 30px 30px 28px 36px 20px 56px 82px 60px 10px; align-items: center; justify-items: center; }
.tray::after { content: ""; width: 1px; height: 50px; background: #b0b0b2; }
.esp { font-size: 14.500px; letter-spacing: -.4px; }
.clock { display: flex; flex-direction: column; align-items: center; font-size: 14.500px; line-height: 23px; letter-spacing: -.5px; }
```
